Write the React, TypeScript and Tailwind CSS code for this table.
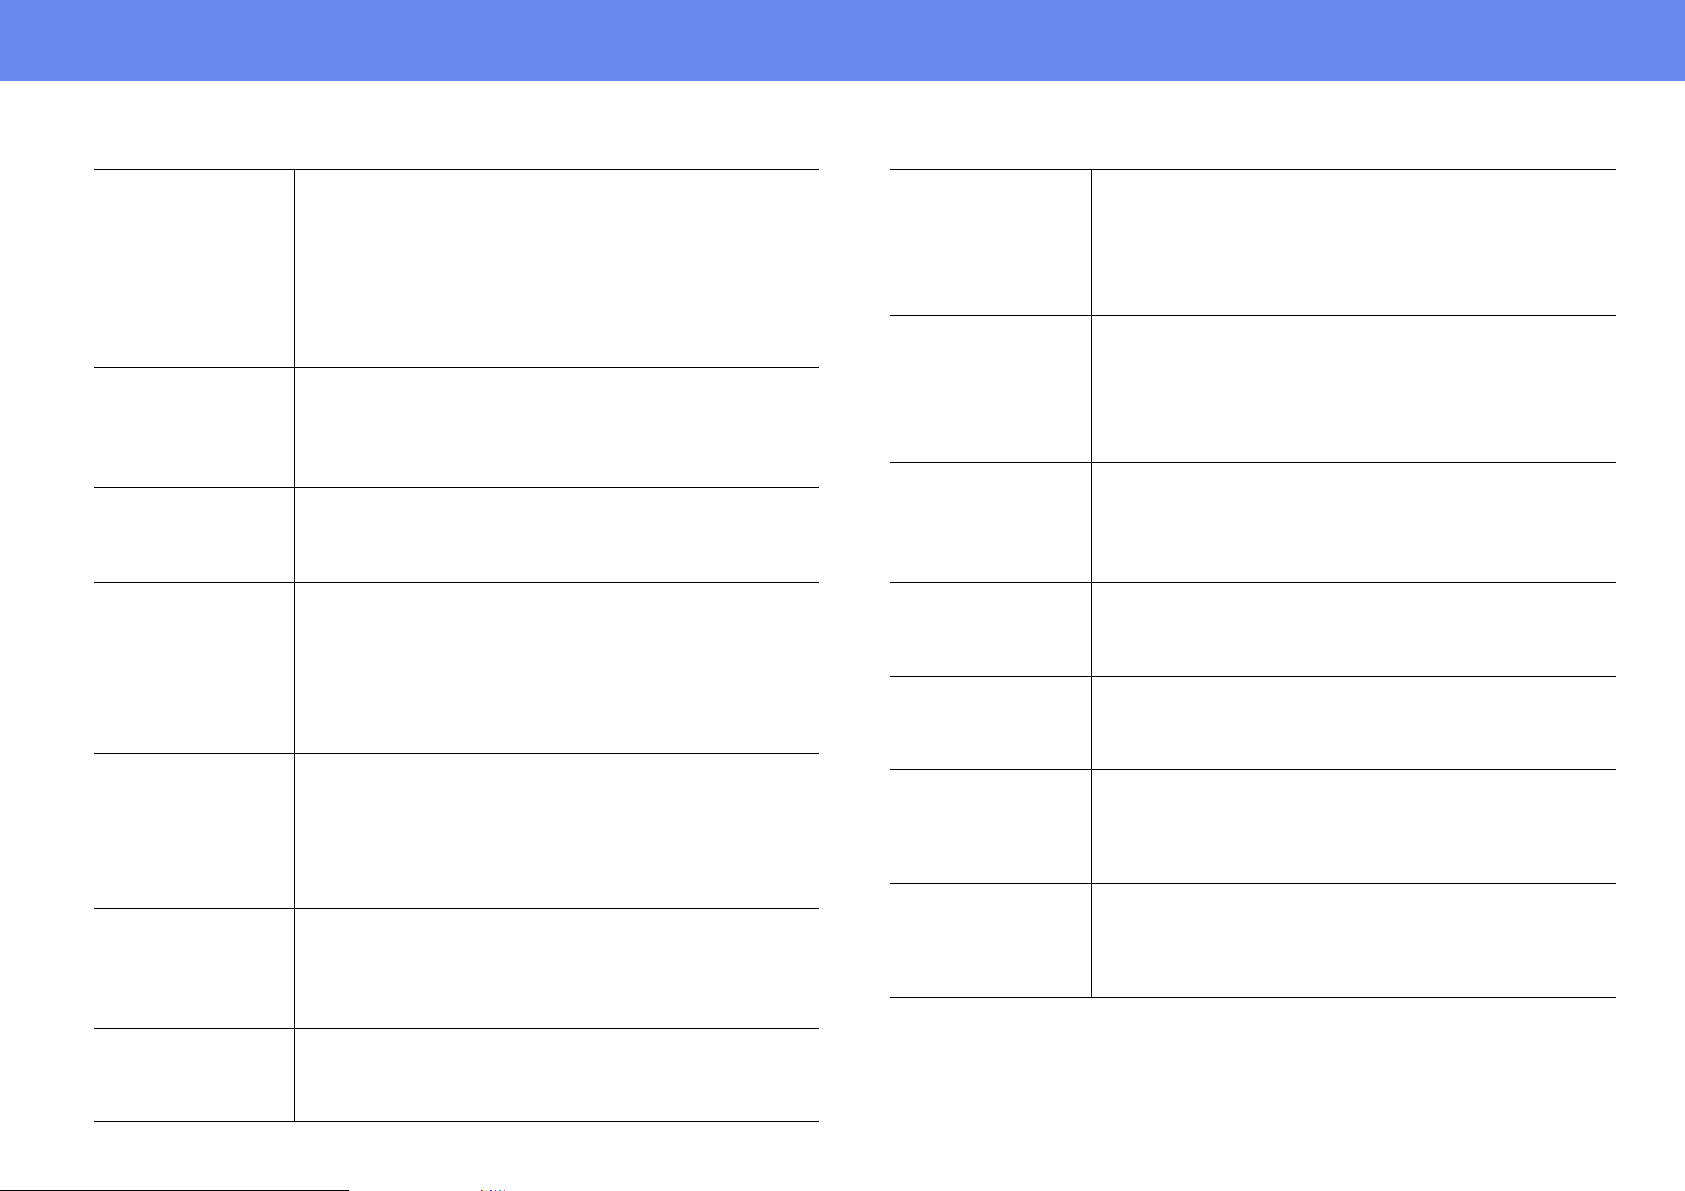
const leftRows = [198, 120, 95, 171, 155, 120, 93];
const rightRows = [146, 147, 120, 94, 93, 114, 114];

function SpecTable({ rows, labelWidth, width }: { rows: number[]; labelWidth: string; width: string }) {
  return (
    <div className={`${width} border-b border-black`}>
      {rows.map((h, i) => (
        <div key={i} className="flex border-t border-black" style={{ height: h }}>
          <div className={`${labelWidth} shrink-0 border-r border-black`} />
          <div className="flex-1" />
        </div>
      ))}
    </div>
  );
}

export default function App() {
  return (
    <div className="h-[1191px] w-[1685px] flex flex-col bg-white overflow-hidden font-['Liberation_Sans',sans-serif]">
      {/* Title band */}
      <header className="h-[81px] shrink-0 bg-[#6889ee]" />

      {/* Two spec tables */}
      <main className="flex items-start gap-[71px] pl-[94px] pt-[88px]">
        <SpecTable rows={leftRows} labelWidth="w-[201px]" width="w-[725px]" />
        <SpecTable rows={rightRows} labelWidth="w-[202px]" width="w-[726px]" />
      </main>

      {/* Footer rule */}
      <footer className="mt-auto flex items-end h-px">
        <div className="w-[349px] h-px bg-black" />
        <div className="ml-[132px] flex gap-[3px] h-px">
          <span className="w-[2px] h-px bg-[#e03030]" />
          <span className="w-px h-px bg-[#e0c030]" />
          <span className="w-[2px] h-px bg-[#3050e0]" />
          <span className="w-px h-px bg-[#d030d0]" />
          <span className="w-[2px] h-px bg-[#30a0e0]" />
          <span className="w-px h-px bg-[#e03060]" />
        </div>
      </footer>
    </div>
  );
}
